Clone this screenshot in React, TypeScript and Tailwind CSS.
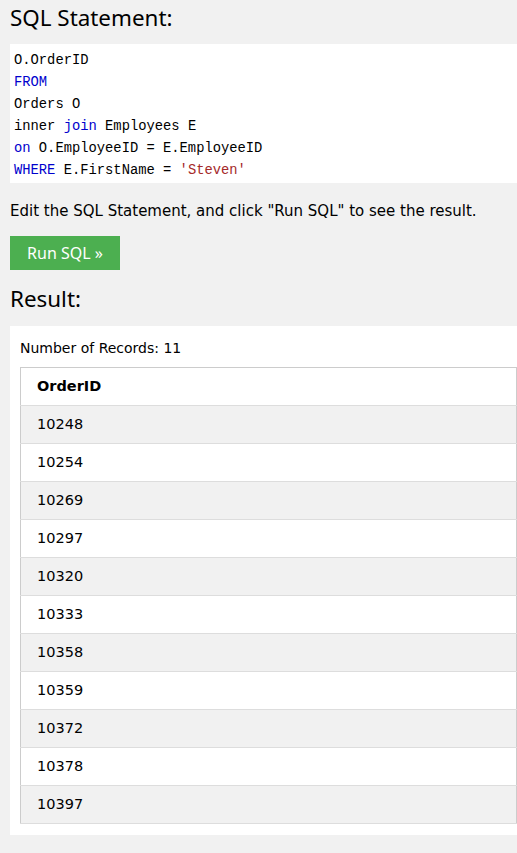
const orders = [10248, 10254, 10269, 10297, 10320, 10333, 10358, 10359, 10372, 10378, 10397];

const kw = "text-[#0000cd]";

export default function App() {
  return (
    <div className="min-h-[853px] w-[517px] overflow-hidden bg-[#f1f1f1] font-['DejaVu_Sans',Verdana,sans-serif] text-black">
      <h2 className="h-[44px] pl-[10px] pt-[3px] font-['Noto_Sans',sans-serif] text-[22.4px] leading-[30px]">SQL Statement:</h2>

      <div className="ml-[10px] h-[139px] bg-white px-[4px] pt-[6px] font-['Liberation_Mono',monospace] text-[13.8px] leading-[22px]">
        <div>O.OrderID</div>
        <div className={kw}>FROM</div>
        <div>Orders O</div>
        <div>
          inner <span className={kw}>join</span> Employees E
        </div>
        <div>
          <span className={kw}>on</span> O.EmployeeID = E.EmployeeID
        </div>
        <div>
          <span className={kw}>WHERE</span> E.FirstName = <span className="text-[#a52a2a]">'Steven'</span>
        </div>
      </div>

      <p className="mt-[17px] pl-[10px] text-[15px] leading-[22px]">
        Edit the SQL Statement, and click "Run SQL" to see the result.
      </p>

      <button className="ml-[10px] mt-[14px] h-[34px] w-[110px] bg-[#4caf50] font-['Noto_Sans',sans-serif] text-[16px] text-white">
        Run SQL »
      </button>

      <h2 className="h-[56px] pl-[10px] pt-[14px] font-['Noto_Sans',sans-serif] text-[22.4px] leading-[30px]">Result:</h2>

      <div className="ml-[10px] bg-white pb-[11px] pl-[10px]">
        <div className="h-[41px] pt-[11px] text-[14px] leading-[22px]">Number of Records: 11</div>
        <table className="w-full border-collapse border border-[#ccc] text-[14.5px]">
          <thead>
            <tr className="h-[38px] border-b border-[#ddd]">
              <th className="pl-[16px] pt-[1px] text-left font-bold">OrderID</th>
            </tr>
          </thead>
          <tbody>
            {orders.map((id, i) => (
              <tr key={id} className={`h-[38px] border-b border-[#ddd] ${i % 2 === 0 ? "bg-[#f1f1f1]" : "bg-white"}`}>
                <td className="pl-[16px] pt-[1px]">{id}</td>
              </tr>
            ))}
          </tbody>
        </table>
      </div>
    </div>
  );
}
